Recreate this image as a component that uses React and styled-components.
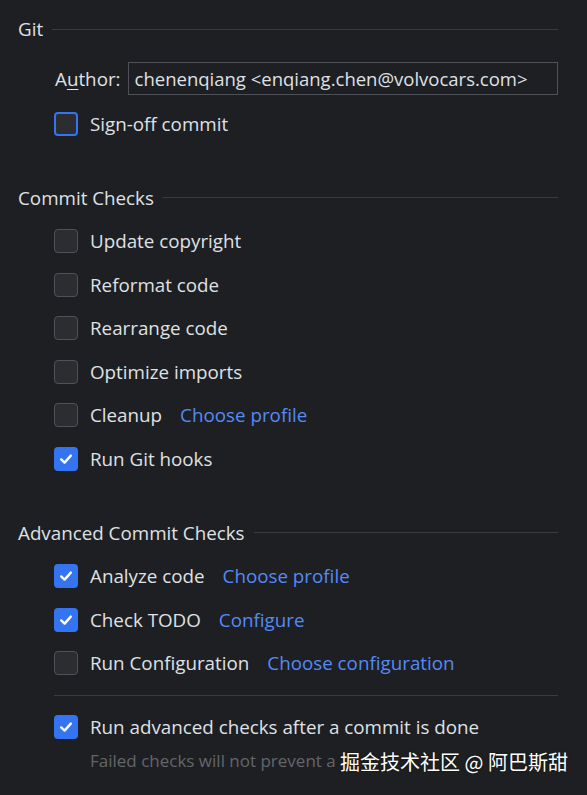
import React from "react";
import styled, { createGlobalStyle } from "styled-components";

const Global = createGlobalStyle`
  html, body { margin: 0; padding: 0; background: #1e1f22; }
  body { font-family: "Open Sans", "Noto Sans", "Noto Sans CJK SC", sans-serif; }
`;

const Page = styled.div`
  position: relative;
  width: 587px;
  height: 795px;
  box-sizing: border-box;
  padding: 17px 29px 0 18px;
  background: #1e1f22;
  color: #dfe1e5;
  font-size: 18.8px;
  overflow: hidden;
`;

const Section = styled.section`
  display: flex;
  flex-direction: column;
  margin-top: ${(p) => (p.$first ? 0 : 40)}px;
`;

const Title = styled.div`
  display: flex;
  align-items: center;
  gap: 9px;
  height: 24px;
  margin-bottom: ${(p) => p.$after || 10}px;
  white-space: nowrap;
  &::after {
    content: "";
    flex: 1;
    height: 1px;
    background: #393b40;
  }
`;

const Body = styled.div`
  display: flex;
  flex-direction: column;
  padding-left: 36px;
`;

const Row = styled.div`
  display: flex;
  align-items: center;
  height: ${(p) => p.$h || 43.5}px;
  white-space: nowrap;
`;

const Label = styled.span`
  margin-right: 7px;
  margin-left: 1px;
  u { text-decoration: underline; text-underline-offset: 3px; }
`;

const Input = styled.div`
  flex: 1;
  height: 33px;
  box-sizing: border-box;
  border: 1px solid #4e5157;
  display: flex;
  align-items: center;
  padding-left: 6px;
  font-size: 18.5px;
  color: #dfe1e5;
`;

const Box = styled.span`
  width: 24px;
  height: 24px;
  box-sizing: border-box;
  border-radius: 4px;
  flex: none;
  margin-right: 12px;
  display: flex;
  align-items: center;
  justify-content: center;
  background: ${(p) => (p.$checked ? "#3574f0" : "#2b2d30")};
  border: ${(p) =>
    p.$checked ? "none" : p.$focus ? "2px solid #3574f0" : "1px solid #4e5157"};
`;

const Link = styled.span`
  color: #548af7;
  margin-left: ${(p) => p.$gap || 18}px;
`;

const Separator = styled.div`
  height: 1px;
  background: #393b40;
  margin: 10px 0 9px;
`;

const Hint = styled.div`
  padding-left: 72px;
  color: #63666c;
  font-size: 17px;
  line-height: 20px;
  margin-top: 2px;
`;

const Watermark = styled.div`
  position: absolute;
  left: 338px;
  top: 748px;
  padding: 0 2px;
  font-size: 20px;
  line-height: 28px;
  color: #ffffff;
  background: rgba(30, 31, 34, 0.92);
  font-family: "Noto Sans CJK SC", "Noto Sans", sans-serif;
  text-shadow: 0 0 2px rgba(0, 0, 0, 0.5);
  white-space: nowrap;
`;

const Check = () => (
  <svg width="16" height="16" viewBox="0 0 16 16" fill="none">
    <path
      d="M3.2 8.4 L6.6 11.6 L12.8 4.6"
      stroke="#fff"
      strokeWidth="2.4"
      strokeLinecap="round"
      strokeLinejoin="round"
    />
  </svg>
);

const CheckRow = ({ checked, focus, children, link, gap }) => (
  <Row>
    <Box $checked={checked} $focus={focus}>{checked && <Check />}</Box>
    <span>{children}</span>
    {link && <Link $gap={gap}>{link}</Link>}
  </Row>
);

export default function App() {
  return (
    <Page>
      <Global />
      <Section $first>
        <Title $after={14}>Git</Title>
        <Body>
          <Row $h={47}>
            <Label>
              A<u>u</u>thor:
            </Label>
            <Input>chenenqiang &lt;enqiang.chen@volvocars.com&gt;</Input>
          </Row>
          <CheckRow focus>Sign-off commit</CheckRow>
        </Body>
      </Section>
      <Section>
        <Title>Commit Checks</Title>
        <Body>
          <CheckRow>Update copyright</CheckRow>
          <CheckRow>Reformat code</CheckRow>
          <CheckRow>Rearrange code</CheckRow>
          <CheckRow>Optimize imports</CheckRow>
          <CheckRow link="Choose profile" gap={18}>Cleanup</CheckRow>
          <CheckRow checked>Run Git hooks</CheckRow>
        </Body>
      </Section>
      <Section>
        <Title>Advanced Commit Checks</Title>
        <Body>
          <CheckRow checked link="Choose profile" gap={18}>Analyze code</CheckRow>
          <CheckRow checked link="Configure" gap={18}>Check TODO</CheckRow>
          <CheckRow link="Choose configuration" gap={18}>Run Configuration</CheckRow>
          <Separator />
          <CheckRow checked>Run advanced checks after a commit is done</CheckRow>
        </Body>
        <Hint>Failed checks will not prevent a commit</Hint>
      </Section>
      <Watermark>掘金技术社区 @ 阿巴斯甜</Watermark>
    </Page>
  );
}
